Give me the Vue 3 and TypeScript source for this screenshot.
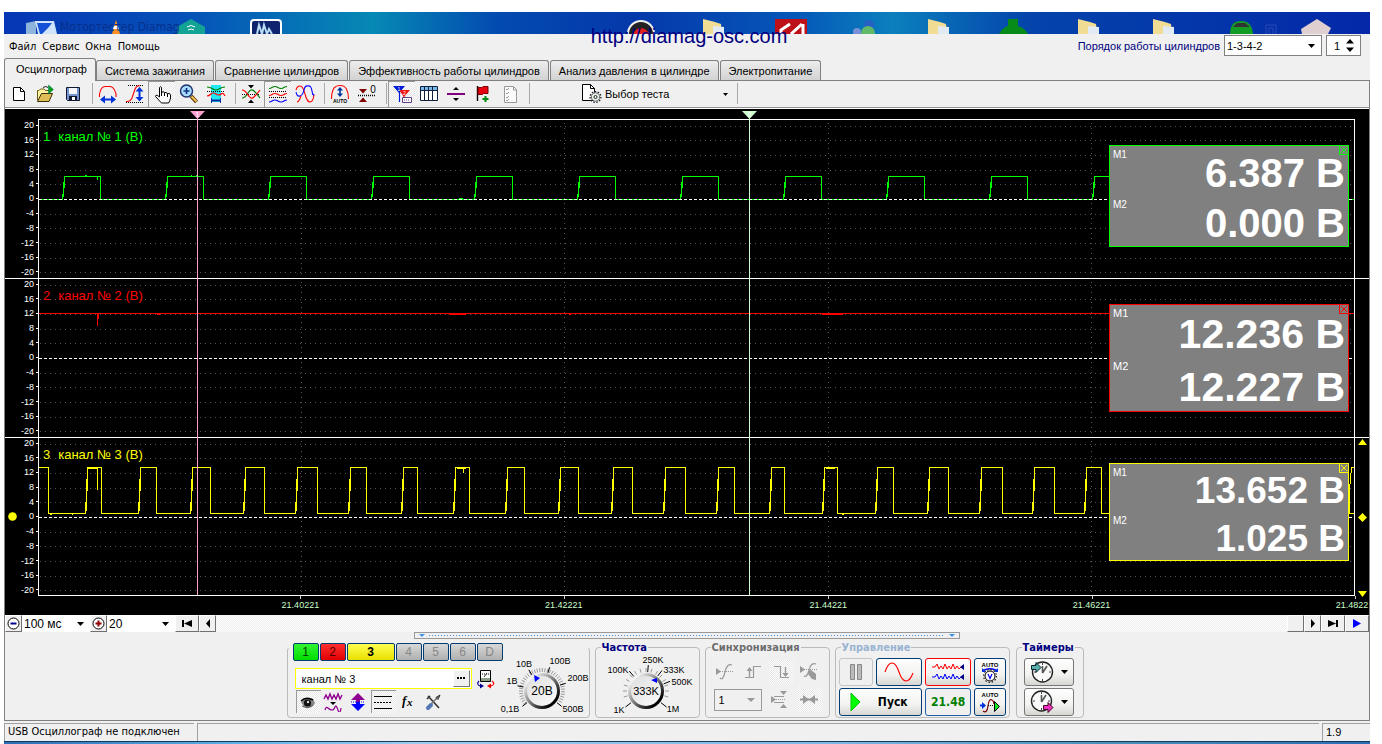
<script setup lang="ts">
import { h, ref } from 'vue'

type Shape = [tag: string, attrs: Record<string, string | number>, text?: string]
interface Art { w: number; h: number; s: Shape[] }

const line = (d: string, stroke: string, width = 1, extra: Record<string, string | number> = {}): Shape =>
  ['path', { d, stroke, fill: 'none', 'stroke-width': width, ...extra }]
const solid = (d: string, fill: string, extra: Record<string, string | number> = {}): Shape =>
  ['path', { d, fill, ...extra }]
const label = (x: number, y: number, text: string, fill: string, size: number, weight = 'normal', anchor = 'middle'): Shape =>
  ['text', { x, y, fill, 'font-size': size, 'font-weight': weight, 'text-anchor': anchor, 'font-family': 'Liberation Sans, Arial, sans-serif' }, text]
const dots = { 'stroke-dasharray': '1 1' }
const wave = (y: number) => `M1 ${y + 1}Q2.5 ${y + 1} 4 ${y}T7 ${y - 1}T10 ${y}T13 ${y + 1}T16 ${y}T19 ${y - 1}`

const art: Record<string, Art> = {
  blank: { w: 20, h: 20, s: [
    ['path', { d: 'M4.5 3.5H11.5L15.5 7.5V16.5H4.5Z', fill: '#fff', stroke: '#000' }], line('M11.5 3.5V7.5H15.5', '#000')] },
  open: { w: 20, h: 20, s: [
    ['path', { d: 'M1.5 16.5V6.5H3L4.5 5H8L9.5 6.5H13.5V9', fill: '#fff2a0', stroke: '#6b5a10' }],
    ['path', { d: 'M1.5 17.5L5.5 9.5H16.5L13 17.5Z', fill: '#e0bd55', stroke: '#3b300a' }],
    ['path', { d: 'M12.5 1L17.5 5.5L12.5 10Z', fill: '#0aa018', stroke: '#066', 'stroke-width': 0.5 }], line('M7 3.5Q10 1.5 12 3.5', '#222')] },
  save: { w: 20, h: 20, s: [
    ['path', { d: 'M3.5 3.5H16.5V16.5H4.5L3.5 15.5Z', fill: '#7794cf', stroke: '#101830' }],
    solid('M6 4H14V10H6Z', '#f4f6fc'), solid('M6 12H14V16H6Z', '#101830'), solid('M9 13H12V16H9Z', '#fff')] },
  period: { w: 20, h: 20, s: [
    line('M1.5 13V10Q3 2.5 7 2.5H12Q16 2.5 18 10V13', '#f00', 1.1), line('M4 15.5H16', '#0033d8', 2), solid('M2 15.5L7 11.5V19.5Z M18 15.5L13 11.5V19.5Z', '#0033d8')] },
  ampl: { w: 20, h: 20, s: [
    line('M3 1.5H18M1 18.5H18', '#000', 1, dots), line('M1 17.5Q5 18 7 14L10 5Q12 1 15 2', '#f00', 1.1),
    line('M14.5 6V14', '#0033d8', 2), solid('M14.5 3L18.5 7.5H10.5Z M14.5 17.5L18.5 13H10.5Z', '#0033d8')] },
  hand: { w: 20, h: 20, s: [
    ['path', { d: 'M7.5 13V3.5Q8.5 2 9.5 3.5V9L10 8Q12 7 12.5 9L13 8.5Q15 8 15.5 10L16 9.5Q18 9 18.5 11V14Q18 17 16.5 19H9.5L3.5 12.5Q3.5 10.5 5.5 11.5Z', fill: '#fff', stroke: '#000' }], line('M9.5 9V12M12.5 9V12M15.5 10V13', '#000')] },
  lens: { w: 20, h: 20, s: [
    line('M12 12L17.5 18', '#5a3308', 4), line('M12.5 12.5L17.5 17.5', '#f0c050', 2),
    ['circle', { cx: 7.5, cy: 7, r: 6, fill: '#a8dcff', stroke: '#1c2f6e', 'stroke-width': 1.4 }], line('M4.5 7H10.5M7.5 4V10', '#103080', 1.6)] },
  band: { w: 20, h: 20, s: [
    solid('M5 1H15V18H5Z', '#1fe8f0'), line('M1 3Q4 3 7 5T13 5T19 3', '#008000', 1.2), line('M1 7.5H19', '#000', 1, dots),
    line('M1 12Q3 12 5 10T10 10T15 10T19 12', '#f00', 1.2), line('M6 16.5H14', '#0030a0', 2), line('M5.5 14V19M14.5 14V19', '#0030a0')] },
  cross: { w: 20, h: 20, s: [
    solid('M7 1H13L10 4.5Z M7 19H13L10 15.5Z', '#000'), line('M1 10.5H19', '#000', 1, dots),
    line('M1 14Q4 14 7 9T13 7T19 14', '#008000', 1.2), line('M1 6Q4 6 7 11T13 13T19 6', '#f00', 1.2)] },
  stack: { w: 20, h: 20, s: [
    line(wave(3.5), '#008000', 1.2), line('M1 7.5H19', '#000', 1, dots), line(wave(10.5), '#f00', 1.2), line('M1 13.5H19', '#000', 1, dots), line(wave(17), '#0000ff', 1.2)] },
  overlap: { w: 20, h: 20, s: [
    line('M1 6Q2 2 5 2Q8 2 10 10T15 18Q18 18 19 11', '#f00', 1.1), line('M1 8Q2 13 5 12T9 6T13 2Q16 1 17 7T19 10', '#0000ff', 1.1), line('M2 18Q4 18 6 12', '#f00', 1.1)] },
  auto: { w: 20, h: 20, s: [
    line('M1.5 15Q1.5 8 4 4Q7 1 10 1.5Q14 1 16.5 5Q18.5 9 18.5 15', '#f00', 1.1), line('M10 5V11', '#0030a0', 1.6), solid('M10 3L13 6.5H7Z M10 13L13 9.5H7Z', '#0030a0'),
    label(10, 19, 'AUTO', '#000', 5, 'bold')] },
  zero: { w: 20, h: 20, s: [
    solid('M2 5H10L6 9.5Z M2 18H10L6 13.5Z', '#800000'), line('M1 11.5H19', '#000', 1.4, dots), label(16, 9, '0', '#000', 10)] },
  marks: { w: 20, h: 20, s: [
    solid('M1 2H13L7 9Z', '#0018d8'), solid('M7 6H18L12 13Z', '#f01010'), line('M7.5 7V18', '#0018d8', 1.2), line('M12 11V14', '#f01010'),
    label(7, 7, '1', '#fff', 5), label(12.5, 11, '2', '#fff', 5), ['path', { d: 'M10.500 13.500H19.500V18.500H10.500Z', fill: '#fff', stroke: '#604080' }], line('M12 16H18', '#604080', 1, dots)] },
  table: { w: 20, h: 20, s: [
    ['path', { d: 'M1.500 2.500H18.500V16.500H1.500Z', fill: '#fff', stroke: '#102040' }], solid('M2 3H18V6H2Z', '#79b9e8'), line('M1.5 6.5H18.5M5.5 3V16M9.5 3V16M13.5 3V16', '#102040')] },
  split: { w: 20, h: 20, s: [line('M1 10H19', '#800080', 2), solid('M7 6H13L10 3Z M7 14H13L10 17Z', '#000')] },
  flag: { w: 20, h: 20, s: [
    line('M4.500 2V17', '#000', 1.4), ['path', { d: 'M5 3.500H9L10 2.500H15V9.500H10.500L9.500 10.500H5Z', fill: '#e80010', stroke: '#700' }], line('M12.500 12V18M9.500 15H15.500', '#008a10', 2)] },
  list: { w: 20, h: 20, s: [
    ['path', { d: 'M4.500 2.500H13.500L16.500 5.500V18.500H4.500Z', fill: '#fafafa', stroke: '#999' }], line('M6 5L7 6L9 4M6 9L7 10L9 8M6 13L7 14L9 12M6 16L7 17L9 15', '#999'), line('M13.500 3V6H16', '#999')] },
  test: { w: 22, h: 20, s: [
    ['path', { d: 'M1.500 .500H9.500L13.500 4.500V16.500H1.500Z', fill: '#fff', stroke: '#000' }], line('M9.500 .500V4.500H13.500', '#000'),
    ['circle', { cx: 14.5, cy: 13, r: 5.4, fill: 'none', stroke: '#222', 'stroke-width': 1.4, 'stroke-dasharray': '1.5 1.5' }], ['circle', { cx: 14.5, cy: 13, r: 4.2, fill: '#e6f2e6', stroke: '#667' }], ['circle', { cx: 14.5, cy: 13, r: 1.5, fill: '#fff', stroke: '#222' }]] },
  down: { w: 7, h: 4, s: [solid('M0 0H7L3.5 4Z', '#000')] },
  downSmall: { w: 5, h: 3, s: [solid('M0 0H5L2.5 3Z', '#000')] },
  downGray: { w: 8, h: 4, s: [solid('M0 0H8L4 4Z', '#999')] },
  spin: { w: 8, h: 13, s: [solid('M0 4.500H8L4 0Z M0 8.500H8L4 13Z', '#000')] },
  minus: { w: 13, h: 13, s: [['circle', { cx: 6.5, cy: 6.5, r: 5.5, fill: '#fff', stroke: '#000' }], line('M3.500 6.500H9.500', '#000090', 2)] },
  plus: { w: 13, h: 13, s: [['circle', { cx: 6.5, cy: 6.5, r: 5.5, fill: '#fff', stroke: '#000' }], line('M3.500 6.500H9.500M6.500 3.500V9.500', '#900000', 2)] },
  first: { w: 12, h: 9, s: [solid('M1 1H3V8H1Z M11 1V8L3 4.500Z', '#000')] },
  last: { w: 12, h: 9, s: [solid('M9 1H11V8H9Z M1 1V8L9 4.500Z', '#000')] },
  prev: { w: 6, h: 9, s: [solid('M5 0V9L1 4.500Z', '#000')] },
  next: { w: 6, h: 9, s: [solid('M1 0V9L5 4.500Z', '#000')] },
  run: { w: 10, h: 9, s: [solid('M1 0V9L9 4.500Z', '#0000ff')] },
  more: { w: 9, h: 3, s: [solid('M0 0H2V2H0Z M3 0H5V2H3Z M6 0H8V2H6Z', '#000')] },
  device: { w: 20, h: 20, s: [
    ['path', { d: 'M4.500 1.500H14.500V12.500H4.500Z', fill: '#fff', stroke: '#000' }], solid('M5 9H14V12H5Z', '#8aa088'), line('M6 5H13', '#000', 1, dots), line('M8 8L11 4', '#333'),
    line('M3 12Q0 15 4 17', '#000090', 1.2), solid('M4 14.500L8 17L4 19.500Z', '#000090'), line('M16 12Q20 15 15 17', '#f00', 1.2), solid('M15 14.500L11 17L15 19.500Z', '#f00')] },
  eye: { w: 20, h: 20, s: [
    solid('M3 10Q8 4 15 7L17 11Q14 17 8 16Q5 14 3 10Z', '#888'), line('M3 9Q8 4 15 8', '#000', 1.5), ['circle', { cx: 9.5, cy: 11, r: 3.6, fill: '#111' }], ['circle', { cx: 10, cy: 10, r: 1.2, fill: '#ddd' }], line('M4 14Q9 17 15 13', '#555')] },
  noise: { w: 20, h: 20, s: [
    line('M1 7L3 3L5 7L7 2L9 7L11 3L13 7L15 2L17 7L19 3', '#900090', 1.4), solid('M7 10H13L10 13Z', '#000'), line('M2 18Q3 14 5 16T9 18T12 15T15 18T18 16', '#900090', 1.2)] },
  height: { w: 20, h: 20, s: [solid('M10 1L17 8H12V10H8V8H3Z', '#900090'), solid('M10 19L17 12H12V10H8V12H3Z', '#0000ff'), line('M3 10H17', '#0000ff', 1, dots)] },
  lines: { w: 20, h: 20, s: [line('M1 4.500H19M1 16.500H19', '#000', 1.2), line('M1 10.500H19', '#000', 1, { 'stroke-dasharray': '2 1' })] },
  fx: { w: 20, h: 20, s: [['text', { x: 4, y: 13, 'font-size': 13, 'font-style': 'italic', 'font-weight': 'bold', 'font-family': 'Liberation Serif, serif' }, 'f'], ['text', { x: 9, y: 14, 'font-size': 11, 'font-style': 'italic', 'font-weight': 'bold', 'font-family': 'Liberation Serif, serif' }, 'x']] },
  tools: { w: 20, h: 20, s: [
    line('M5 4L16 16M4 7L7 4', '#333', 1.6), line('M16 4L8 12', '#777', 1.6), line('M17 3L13 5.500L15 7.500Z', '#333'), line('M8 13L5 16', '#5578b5', 4, { 'stroke-linecap': 'round' })] },
  sRise: { w: 20, h: 20, s: [solid('M1 6L6 9.500L1 13Z', '#999'), line('M1 9.500H19', '#999', 1, dots), line('M5 16Q8 19 10 10T17 3', '#999', 1.2)] },
  sUp: { w: 20, h: 20, s: [line('M2 15.500H10.500V4.500H18', '#999', 1.2), line('M6.500 7V15', '#999', 1.4), solid('M6.500 5L9.500 9H3.500Z', '#999')] },
  sDown: { w: 20, h: 20, s: [line('M3 4.500H9.500V15.500H18', '#999', 1.2), line('M14.500 5V12', '#999', 1.4), solid('M14.500 15L17.500 11H11.500Z', '#999')] },
  sHand: { w: 20, h: 20, s: [solid('M1 4L6 7.500L1 11Z', '#999'), line('M1 7.500H19', '#999', 1, dots), line('M5 14Q8 16 10 8T17 2', '#999', 1.2), solid('M9 9L12 8L17 12V18L13 17L9 12Z', '#999')] },
  sLevel: { w: 20, h: 20, s: [solid('M2 6L7 9.500L2 13Z M11 1H18L14.500 5Z M11 18H18L14.500 14Z', '#999'), line('M5 6.500H15M5 12.500H15', '#999'), line('M5 9.500H17', '#999', 1, dots)] },
  sJoin: { w: 20, h: 20, s: [solid('M4 5L10 9.500L4 14Z M16 5L10 9.500L16 14Z', '#999'), line('M1 9.500H19', '#999', 2)] },
  pause: { w: 12, h: 16, s: [['path', { d: 'M.500 .500H4.500V15.500H.500Z M7.500 .500H11.500V15.500H7.500Z', fill: '#bbb', stroke: '#888' }]] },
  sine: { w: 30, h: 20, s: [line('M1 10Q4 1 8 1Q12 1 15 10Q18 19 22 19Q26 19 29 11', '#f00', 1.1)] },
  dual: { w: 34, h: 20, s: [
    line('M1 5H4L6 2L8 7L10 4L12 7L14 2L16 7L18 4L20 7L22 2L24 7L26 4L28 7L30 5', '#f00'), line('M1 15H4L6 12L8 17L10 14L12 17L14 12L16 17L18 14L20 17L22 12L24 17L26 14L28 17L30 15', '#0000ff'), solid('M33 2V8L29 5Z M33 12V18L29 15Z', '#000080')] },
  autoV: { w: 22, h: 24, s: [
    label(11, 7, 'AUTO', '#000', 6, 'bold'), line('M4 10.500Q11 7 18 10.500', '#0000ff', 1.4), solid('M3 8V12H7Z M19 8V12H15Z', '#0030e0'),
    ['circle', { cx: 11, cy: 16, r: 6.4, fill: 'none', stroke: '#222', 'stroke-width': 1.2, 'stroke-dasharray': '1.5 1.8' }], ['circle', { cx: 11, cy: 16, r: 5, fill: '#fff', stroke: '#000' }], line('M9 14L11 18.500L13 14', '#0000ff', 1.2)] },
  autoS: { w: 22, h: 24, s: [
    label(11, 7, 'AUTO', '#000', 6, 'bold'), line('M1 15.500H5', '#0030e0', 2), solid('M3 12L7 15.500L3 19Z', '#0030e0'), line('M4 21Q8 24 9 16T13 10Q15 11 15 14', '#700', 1.2), ['path', { d: 'M15.500 11.500L20.500 16.500L15.500 21.500Z', fill: '#10e820', stroke: '#000' }], line('M9 15.500H15', '#000', 1, dots)] },
  play: { w: 11, h: 20, s: [['path', { d: 'M1 1L10 10L1 19Z', fill: '#00ff00', stroke: '#0ac00a' }]] },
  clockIn: { w: 24, h: 24, s: [
    ['circle', { cx: 12.5, cy: 12, r: 10, fill: '#fafafa', stroke: '#222', 'stroke-width': 1.4 }], line('M12.500 3V5M12.500 19V21M4 12H6M19 12H21', '#444'), line('M12.500 13L17 6M12.500 13V6', '#555', 1.6), ['path', { d: 'M1.500 5.500H6V2.500L11 7.500L6 12.500V9.500H1.500Z', fill: '#58b0aa', stroke: '#023' }]] },
  clockOut: { w: 24, h: 24, s: [
    ['circle', { cx: 11.5, cy: 11, r: 10, fill: '#fafafa', stroke: '#222', 'stroke-width': 1.4 }], line('M11.500 2V4M11.500 18V20M3 11H5M18 11H20', '#444'), line('M11.500 12L16 5M11.500 12V5', '#555', 1.6), ['path', { d: 'M13.500 15.500H18V12.500L23 17.500L18 22.500V19.500H13.500Z', fill: '#f030c0', stroke: '#402' }]] },
}

const Glyph = (props: { name: string }) => {
  const a = art[props.name]
  return h('svg', { width: a.w, height: a.h, viewBox: `0 0 ${a.w} ${a.h}`, 'aria-hidden': 'true', style: 'display:block;flex:none' },
    a.s.map(([tag, attrs, text]) => h(tag, attrs, text)))
}
Glyph.props = ['name']

const tabs = ['Осциллограф', 'Система зажигания', 'Сравнение цилиндров', 'Эффективность работы цилиндров', 'Анализ давления в цилиндре', 'Электропитание']
const activeTab = ref(0)
const toolbar: { icon: string; title: string; on?: boolean }[][] = [
  [{ icon: 'blank', title: 'Новый' }, { icon: 'open', title: 'Открыть' }, { icon: 'save', title: 'Сохранить' }],
  [{ icon: 'period', title: 'Период' }, { icon: 'ampl', title: 'Амплитуда' }, { icon: 'hand', title: 'Рука', on: true }, { icon: 'lens', title: 'Лупа' }, { icon: 'band', title: 'Участок' }],
  [{ icon: 'cross', title: 'Совместить' }, { icon: 'stack', title: 'Раздельно', on: true }, { icon: 'overlap', title: 'Наложение' }],
  [{ icon: 'auto', title: 'Авто' }, { icon: 'zero', title: 'Ноль' }],
  [{ icon: 'marks', title: 'Маркеры', on: true }, { icon: 'table', title: 'Таблица' }, { icon: 'split', title: 'Разделить' }, { icon: 'flag', title: 'Флаг' }, { icon: 'list', title: 'Список' }],
]

const ticks = [20, 16, 12, 8, 4, 0, -4, -8, -12, -16, -20]
const PLOT_W = 1315
const levelY = (v: number) => Math.round(79 - v * 3.67) + 0.5

/* each pulse: start of the rising edge and the falling edge, in plot units */
const pulsePath = (pulses: number[][], low: number, high: number, from: number, startHigh = 0) => {
  let d = startHigh ? `M${from} ${high}H${startHigh}V${low}` : `M${from} ${low}`
  for (const [a, b] of pulses) d += `H${a + 0.5}L${a + 1.5} ${(low + high) / 2}H${a + 1.5}L${a + 2.5} ${high}H${b + 0.5}V${low}`
  return d + `H${PLOT_W}`
}
const edgePath = (pulses: number[][], low: number, high: number) =>
  pulses.map(([a]) => `M${a + 1.5} ${low - 3}V${(low + high) / 2}M${a + 2.5} ${(low + high) / 2}V${high}`).join('')
const first = Array.from({ length: 13 }, (_, i) => [23 + i * 103, 61 + i * 103])
const third = [[46, 62], [99, 117], [151, 171], [204, 225], [256, 278], [309, 327], [362, 378], [414, 430], [466, 485], [519, 539], [572, 593], [624, 646], [677, 695], [730, 745], [783, 798], [836, 854], [888, 909], [940, 963], [993, 1015], [1045, 1062], [1098, 1116], [1151, 1170], [1204, 1222], [1257, 1275]]
const channels = [
  { n: 1, color: '#00ff00', path: pulsePath(first, 79.5, 56.5, 0) + edgePath(first, 79.5, 56.5), extra: 'M46 55.500H48M152 55.500H153M157 55.500H159M420 78.500H424M58.500 57V60', m: ['6.387 В', '0.000 В'] },
  { n: 2, color: '#ff0000', path: `M0 34.500H${PLOT_W}`, extra: 'M58.500 35V47M410 35.500H427M530 35.500H532M783 35.500H804M118 35.500H121M59.500 35V40', m: ['12.236 В', '12.227 В'] },
  { n: 3, color: '#ffff00', path: pulsePath(third, 75.5, 29.5, 0, 9.5) + edgePath(third, 75.5, 29.5) + 'M1310.500 75V52L1312.500 29.500H1315', extra: 'M48 30.500H59M58.500 31V52M418 30.500H427M424.500 31V35M787 30.500H796M11 76.500H13M33 76.500H34M803 76.500H805', m: ['13.652 В', '1.025 В'] },
]
const at = (x: number) => ({ left: `${(x / PLOT_W) * 100}%` })
const times = [{ x: 262, t: '21.40221' }, { x: 525, t: '21.42221' }, { x: 789, t: '21.44221' }, { x: 1052, t: '21.46221' }, { x: 1315, t: '21.4822' }]
const markers = [{ x: 158, id: 1, color: '#ff9fcf' }, { x: 710, id: 2, color: '#ccffcc' }]

const channelButtons = ['1', '2', '3', '4', '5', '6', 'D']
const channelName = ref('канал № 3')
const channelTools = [{ icon: 'eye', on: true, t: 'Показать' }, { icon: 'noise', t: 'Фильтр' }, { icon: 'height', t: 'Масштаб' }, { icon: 'lines', on: true, t: 'Линии' }, { icon: 'fx', t: 'Функция' }, { icon: 'tools', t: 'Настройки' }]
const syncTop = [{ icon: 'sRise', t: 'Уровень' }, { icon: 'sUp', t: 'Фронт' }, { icon: 'sDown', on: true, t: 'Спад' }, { icon: 'sHand', t: 'Вручную' }]

const ray = (cx: number, cy: number, deg: number, r1: number, r2: number) => {
  const a = (deg * Math.PI) / 180
  return `M${(cx + Math.sin(a) * r1).toFixed(1)} ${(cy - Math.cos(a) * r1).toFixed(1)}L${(cx + Math.sin(a) * r2).toFixed(1)} ${(cy - Math.cos(a) * r2).toFixed(1)}`
}
const rays = (cx: number, cy: number, degs: number[], r1: number, r2: number) => degs.map((d) => ray(cx, cy, d, r1, r2)).join('')
const range = (a: number, b: number, step: number) => Array.from({ length: Math.floor((b - a) / step) + 1 }, (_, i) => a + i * step)
const voltMinor = rays(44, 39, range(-125, 125, 7), 19, 23)
const voltMajor = rays(44, 39, [-128, -78, -32, 18, 72, 128], 19, 25)
const freqMinor = rays(50, 39, range(-105, 105, 15), 19, 23)
const freqMajor = rays(50, 39, [-128, -40, 5, 38, 68, 128], 19, 26)
</script>

<template>
  <div class="desk">
    <svg class="wall" viewBox="0 0 1366 22" preserveAspectRatio="none" aria-hidden="true">
      <defs>
        <linearGradient id="sky"><stop offset="0" stop-color="#0636b4" /><stop offset=".13" stop-color="#0550b8" /><stop offset=".27" stop-color="#0689b4" /><stop offset=".36" stop-color="#034bb0" /><stop offset=".46" stop-color="#0538ab" /><stop offset=".58" stop-color="#0557b8" /><stop offset=".65" stop-color="#0b80bd" /><stop offset=".75" stop-color="#0444ab" /><stop offset="1" stop-color="#0428a8" /></linearGradient>
      </defs>
      <rect width="1366" height="22" fill="url(#sky)" />
      <path d="M22 11L32 9V22H22Z" fill="#8fb4dc" /><path d="M31 9H50L53 22H34Z" fill="#cfe4fa" /><path d="M33 11H48L44 16L38 22H36Z" fill="#1550d8" />
      <path d="M112 8L116 22H108Z" fill="#ff9020" /><path d="M110 14H114L115 17H109Z" fill="#fff" />
      <path d="M187 7L201 15V22H173V15Z" fill="#12a394" /><path d="M183 15Q187 12 191 15M184 18Q187 16 190 18" stroke="#fff" fill="none" />
      <text x="56" y="19" font-size="12" fill="#06308c">Мотортестер Diamag</text>
      <rect x="247" y="8" width="30" height="20" rx="3" fill="#10236e" stroke="#fff" stroke-width="2" /><path d="M253 22L255 13L258 22L260 13L263 22L265 17L268 22" stroke="#b8dcf4" stroke-width="2" fill="none" />
      <circle cx="637" cy="22" r="13" fill="#222" stroke="#eee" stroke-width="2" /><path d="M628 22Q637 10 646 22Z" fill="#e02020" />
      <path v-for="x in [699, 924, 1074, 1149]" :key="x" :d="`M${x} 7L${x + 12} 10L${x + 18} 12L${x + 19} 22H${x}Z`" fill="#f1dc94" />
      <path v-for="x in [709, 934, 1084, 1159]" :key="x" :d="`M${x} 14L${x + 11} 15V22H${x}Z`" fill="#e2ebf4" />
      <rect x="771" y="7" width="32" height="15" fill="#bd1018" /><path d="M786 12L777 18V22M798 12L787 22M799 12V22" stroke="#fff" stroke-width="3" fill="none" />
      <circle cx="865" cy="13" r="5" fill="#285fc5" /><circle cx="864" cy="21" r="7" fill="#62b968" /><circle cx="853" cy="20" r="4" fill="#7790d8" />
      <path d="M1004 7H1014V14Q1021 16 1024 22H995Q998 16 1004 14Z" fill="#078b18" />
      <path d="M1226 22Q1226 9 1237 9Q1248 9 1249 22Z" fill="#129c24" /><path d="M1229 15L1233 11H1241L1246 15Z" fill="#333" />
      <path d="M1262 22V13H1272V22M1265 22V16H1269V22" stroke="#2a4ab8" fill="none" /><path d="M1297 17L1313 7L1327 16L1324 22H1298Z" fill="#e0cfd0" />
    </svg>
    <a class="site" href="#">http://diamag-osc.com</a>

    <div class="window">
      <header class="menu">
        <nav><a v-for="m in ['Файл', 'Сервис', 'Окна', 'Помощь']" :key="m" href="#">{{ m }}</a></nav>
        <div class="order">
          <label for="order">Порядок работы цилиндров</label>
          <span class="pick order-pick"><select id="order"><option>1-3-4-2</option></select><Glyph name="down" /></span>
          <span class="pick number-pick"><input value="1" aria-label="Номер цилиндра"><Glyph name="spin" /></span>
        </div>
      </header>
      <div class="tabs" role="tablist">
        <button v-for="(t, i) in tabs" :key="t" role="tab" :class="{ active: i === activeTab }" @click="activeTab = i">{{ t }}</button>
      </div>

      <main>
        <div class="toolbar">
          <template v-for="(g, i) in toolbar" :key="i">
            <button v-for="b in g" :key="b.icon" :class="{ on: b.on }" :aria-label="b.title"><Glyph :name="b.icon" /></button>
            <i class="sep"></i>
          </template>
          <button class="test"><Glyph name="test" /><span>Выбор теста</span><Glyph name="downSmall" /></button>
          <i class="sep"></i>
        </div>

        <section class="scope">
          <div v-for="c in channels" :key="c.n" :class="['row', 'row-' + c.n]">
            <div class="axis">
              <svg v-if="c.n === 3" class="grip" width="9" height="9" viewBox="0 0 9 9"><circle cx="4.500" cy="4.500" r="4.300" fill="#ff0" /></svg>
              <ol><li v-for="t in ticks" :key="t">{{ t }}</li></ol>
            </div>
            <div class="plot">
              <svg :viewBox="`0 0 ${PLOT_W} 158`" preserveAspectRatio="none" shape-rendering="crispEdges" fill="none">
                <path v-for="t in ticks" v-show="t" :key="t" :d="`M1 ${levelY(t)}H${PLOT_W}`" stroke="#555" stroke-dasharray="1 4" />
                <path v-for="t in times.slice(0, 4)" :key="t.x" :d="`M${t.x + 0.5} 3V158`" stroke="#555" stroke-dasharray="1 4" />
                <path :d="c.path" :stroke="c.color" />
                <path :d="c.extra" :stroke="c.color" />
                <path d="M0 79.500H1315" stroke="#fff" stroke-dasharray="3 2" />
              </svg>
              <span class="caption"><b>{{ c.n }}</b>канал № {{ c.n }} (В)</span>
              <div class="readout">
                <button aria-label="Закрыть"><svg width="10" height="10" viewBox="0 0 10 10"><path d="M.500 .500H9.500V9.500H.500ZM2 2L8 8M8 2L2 8" stroke="currentColor" fill="none" /></svg></button>
                <div v-for="(v, i) in c.m" :key="i" class="measure"><span>M{{ i + 1 }}</span><strong>{{ v }}</strong></div>
              </div>
            </div>
            <div class="gutter">
              <svg v-if="c.n === 3" width="9" height="159" viewBox="0 0 9 159" fill="#ff0"><path d="M0 7H9L4.500 1ZM4.500 75L9 79.500L4.500 84L0 79.500ZM0 153H9L4.500 159Z" /></svg>
            </div>
          </div>
          <div class="times"><span v-for="t in times" :key="t.t" :style="at(t.x)">{{ t.t }}</span></div>
          <div class="markers">
            <div v-for="m in markers" :key="m.id" class="marker" :style="{ ...at(m.x), color: m.color }">
              <svg width="15" height="8" viewBox="0 0 15 8"><path d="M0 0H15L7.500 8Z" fill="currentColor" /><text x="7.500" y="6" font-size="7" fill="#fff" text-anchor="middle">{{ m.id }}</text></svg>
            </div>
          </div>
        </section>

        <div class="zoombar">
          <button class="sq" aria-label="Сжать"><Glyph name="minus" /></button>
          <span class="pick flat"><select aria-label="Развёртка"><option>100 мс</option></select><Glyph name="down" /></span>
          <button class="sq" aria-label="Растянуть"><Glyph name="plus" /></button>
          <span class="pick flat"><select aria-label="Масштаб"><option>20</option></select><Glyph name="down" /></span>
          <button class="nav" aria-label="В начало"><Glyph name="first" /></button>
          <button class="sq" aria-label="Назад"><Glyph name="prev" /></button>
          <span class="track"></span>
          <button class="sq" aria-label="Ползунок"></button>
          <button class="sq" aria-label="Вперёд"><Glyph name="next" /></button>
          <button class="nav" aria-label="В конец"><Glyph name="last" /></button>
          <button class="nav" aria-label="Воспроизвести"><Glyph name="run" /></button>
        </div>

        <div class="splitter"><i></i><span></span><i></i></div>

        <div class="panels">
          <fieldset class="channel" aria-label="Канал">
            <div class="channel-left">
              <div class="chans"><button v-for="b in channelButtons" :key="b" :class="'ch-' + b" :disabled="b > '3'">{{ b }}</button></div>
              <div class="name-row">
                <span class="name"><input v-model="channelName" aria-label="Имя канала"><button aria-label="Выбрать"><Glyph name="more" /></button></span>
                <button class="plain" aria-label="Датчик"><Glyph name="device" /></button>
              </div>
              <div class="tool-row"><button v-for="b in channelTools" :key="b.icon" :class="['plain', { on: b.on }]" :aria-label="b.t"><Glyph :name="b.icon" /></button></div>
            </div>
            <svg class="knob" width="92" height="70" viewBox="0 0 92 70">
              <defs>
                <linearGradient id="rim" x1="0" y1="0" x2="1" y2="1"><stop offset=".1" stop-color="#fff" /><stop offset=".5" stop-color="#777" /><stop offset=".85" stop-color="#000" /></linearGradient>
                <linearGradient id="cap" x1="0" y1="0" x2="1" y2="1"><stop offset="0" stop-color="#ddd" /><stop offset="1" stop-color="#fcfcfc" /></linearGradient>
              </defs>
              <path :d="voltMinor" stroke="#999" /><path :d="voltMajor" stroke="#000" />
              <circle cx="44" cy="39" r="16.500" fill="url(#cap)" stroke="url(#rim)" stroke-width="3" />
              <path d="M36 23L42 26L37 30Z" fill="#00f" />
              <text x="44" y="43" class="big">20В</text>
              <text x="26" y="15">10В</text><text x="62" y="12">100В</text><text x="14" y="32">1В</text><text x="80" y="29">200В</text><text x="12" y="60">0,1В</text><text x="75" y="60">500В</text>
            </svg>
          </fieldset>

          <fieldset class="freq"><legend>Частота</legend>
            <svg class="knob" width="100" height="70" viewBox="0 0 100 70">
              <path :d="freqMinor" stroke="#999" /><path :d="freqMajor" stroke="#000" />
              <circle cx="50" cy="39" r="16.500" fill="url(#cap)" stroke="url(#rim)" stroke-width="3" />
              <path d="M61 26L61 31L55 28Z" fill="#00f" />
              <text x="50" y="43" class="mid">333K</text>
              <text x="57" y="11">250K</text><text x="22" y="21">100K</text><text x="78" y="21">333K</text><text x="86" y="33">500K</text><text x="23" y="61">1K</text><text x="77" y="60">1M</text>
            </svg>
          </fieldset>

          <fieldset class="sync"><legend>Синхронизация</legend>
            <div class="sync-row"><button v-for="b in syncTop" :key="b.icon" :class="['plain', { dither: b.on }]" :aria-label="b.t" disabled><Glyph :name="b.icon" /></button></div>
            <div class="sync-row">
              <span class="pick sync-pick"><select aria-label="Канал синхронизации"><option>1</option></select><Glyph name="downGray" /></span>
              <button class="plain" aria-label="Порог" disabled><Glyph name="sLevel" /></button>
              <button class="plain dither" aria-label="Свести" disabled><Glyph name="sJoin" /></button>
            </div>
          </fieldset>

          <fieldset class="control"><legend>Управление</legend>
            <div class="control-grid">
              <button class="off" aria-label="Пауза" disabled><Glyph name="pause" /></button>
              <button aria-label="Один кадр"><Glyph name="sine" /></button>
              <button class="red" aria-label="Непрерывно"><Glyph name="dual" /></button>
              <button aria-label="Авто напряжение"><Glyph name="autoV" /></button>
              <button class="start"><Glyph name="play" /><span>Пуск</span></button>
              <output>21.48</output>
              <button aria-label="Авто запуск"><Glyph name="autoS" /></button>
            </div>
          </fieldset>

          <fieldset class="timers"><legend>Таймеры</legend>
            <button aria-label="Таймер запуска"><Glyph name="clockIn" /><Glyph name="down" /></button>
            <button aria-label="Таймер остановки"><Glyph name="clockOut" /><Glyph name="down" /></button>
          </fieldset>
        </div>
      </main>

      <footer><span class="state">USB Осциллограф не подключен</span><span class="fill"></span><span class="version">1.9</span></footer>
    </div>
    <div class="taskbar"></div>
  </div>
</template>

<style>
body { background: #fff; }
</style>

<style scoped>
* { box-sizing: border-box; }
.desk { position: relative; padding: 12px 12px 0 4px; font: 11px/14px "Liberation Sans", Arial, sans-serif; color: #000; }
button, input, select { font: inherit; color: inherit; margin: 0; padding: 0; border: 0; background: none; appearance: none; border-radius: 0; }
a { color: inherit; text-decoration: none; }
.wall { display: block; width: 100%; height: 22px; }
.wall text { font-family: "DejaVu Sans Condensed", sans-serif; }
.site { position: absolute; left: 0; right: 4px; top: 24px; text-align: center; color: #000080; font-size: 20px; line-height: 24px; }
.window { background: #f0f0f0; }
.menu { display: flex; justify-content: space-between; height: 24px; font-family: "DejaVu Sans Condensed", "DejaVu Sans", sans-serif; }
.menu nav { display: flex; gap: 6px; padding: 6px 0 0 5px; }
.order { display: flex; gap: 4px; padding: 1px 9px 0 0; font-family: "Liberation Sans", Arial, sans-serif; }
.order label { color: #000080; line-height: 22px; }
.pick { display: flex; align-items: center; position: relative; background: #fff; border: 1px solid #808080; }
.pick select, .pick input { width: 100%; height: 100%; padding-left: 2px; }
.pick > svg { position: absolute; right: 6px; pointer-events: none; }
.order-pick { width: 98px; height: 21px; }
.number-pick { width: 35px; height: 21px; }
.number-pick input { padding-left: 7px; }
.tabs { display: flex; align-items: flex-end; height: 22px; }
.tabs button { height: 20px; padding: 0 8px; margin-right: 1px; border: 1px solid #808080; border-bottom: 0; border-radius: 3px 3px 0 0; background: linear-gradient(#ededed, #d2d2d2); white-space: nowrap; }
.tabs .active { height: 23px; margin: 0 0 -1px; padding: 0 8px 2px 11px; background: #f0f0f0; position: relative; }
main { border: 1px solid #808080; }
.toolbar { display: flex; align-items: stretch; height: 28px; padding-bottom: 1px; border-bottom: 1px solid #fff; box-shadow: inset 0 -1px #909090; }
.toolbar button { width: 27px; display: flex; align-items: center; justify-content: center; }
.on, .dither { background: repeating-conic-gradient(#fff 0 25%, #e6e6e6 0 50%) 0 0 / 2px 2px; }
.on { box-shadow: inset 1px 1px #999; }
.sep { width: 8px; margin: 2px 0 3px; background: linear-gradient(#aaa, #aaa) 6px 0 / 1px 100% no-repeat; }
.toolbar .test { width: 200px; padding: 0 3px 0 50px; justify-content: flex-start; gap: 2px; }
.test span { flex: 1; text-align: left; }
.scope { position: relative; background: #000; color: #fff; padding-top: 10px; overflow: hidden; }
.row { display: flex; height: 159px; border-top: 1px solid #fff; }
.row-1 { border-top-color: #000; --c: #00ff00; --row: 50px; --size: 40px; --tag: 10px; }
.row-2 { --c: #ff0000; --row: 53px; --size: 41px; --tag: 11px; }
.row-3 { --c: #ffff00; --row: 48px; --size: 37px; --tag: 10px; }
.axis { width: 33px; display: flex; align-items: center; justify-content: flex-end; margin-top: -1px; }
.grip { margin: 0 auto 0 3px; flex: none; }
.axis ol { list-style: none; margin: 0; padding: 0; height: 100%; display: flex; flex-direction: column; justify-content: space-between; font-size: 9px; line-height: 12px; text-align: right; }
.axis li { display: flex; align-items: center; justify-content: flex-end; gap: 2px; }
.axis li::after { content: ""; width: 2px; height: 1px; background: #fff; }
.plot { position: relative; flex: 1; border: solid #fff; border-width: 0 1px; }
.row-1 .plot { border-top-width: 1px; margin-top: -1px; }
.plot > svg { display: block; width: 100%; height: 158px; }
.caption { position: absolute; left: 4px; top: 9px; color: var(--c); font-size: 13px; line-height: 16px; }
.caption b { font-weight: normal; margin-right: 8px; }
.readout { position: absolute; right: 5px; top: 25px; width: 240px; border: 1px solid var(--c); background: #808080; color: #fff; }
.readout button { position: absolute; right: -1px; top: -1px; color: var(--c); }
.readout button svg { display: block; }
.measure { display: flex; justify-content: space-between; height: var(--row); padding: 1px 3px; }
.measure span { font-size: var(--tag); line-height: 15px; }
.measure strong { font-size: var(--size); line-height: 53px; }
.row-3 .measure strong { line-height: 51px; }
.row-2 .measure strong { line-height: 56px; }
.gutter { width: 14px; padding-left: 3px; }
.gutter svg { display: block; }
.times { position: relative; height: 20px; margin: -1px 14px 0 33px; border-top: 1px solid #fff; font-size: 9px; line-height: 18px; color: #ccffcc; }
.times span { position: absolute; width: 40px; margin-left: -20px; text-align: center; }
.times span:last-child { width: 34px; }
.times span::before { content: ""; position: absolute; left: 20px; top: 0; width: 1px; height: 3px; background: #ccc; }
.markers { position: absolute; inset: 2px 15px 20px 34px; pointer-events: none; }
.marker { position: absolute; top: 0; bottom: 0; width: 1px; background: currentColor; }
.marker svg { position: absolute; left: -7px; top: 0; }
.zoombar { display: flex; height: 17px; }
.zoombar button { display: flex; align-items: center; justify-content: center; background: #f0f0f0; border: 1px solid; border-color: #fff #707070 #707070 #fff; }
.sq { width: 17px; }
.nav { width: 24px; }
.flat { width: 68px; border: 0; font-size: 12px; }
.track { flex: 1; background: repeating-conic-gradient(#fff 0 25%, #ececec 0 50%) 0 0 / 2px 2px; }
.splitter { display: flex; align-items: center; gap: 4px; width: 40%; height: 7px; margin: 0 auto; border: 1px solid #999; padding: 0 4px; }
.splitter span { flex: 1; height: 1px; background: repeating-linear-gradient(90deg, #3c94e8 0 1px, transparent 1px 3px); }
.splitter i { border: solid transparent; border-width: 3px 3px 0; border-top-color: #3c94e8; }
.panels { display: flex; justify-content: center; gap: 5px; height: 81px; padding: 8px 4px 2px 0; }
fieldset { position: relative; min-width: 0; margin: 0; padding: 0; height: 71px; border: 1px solid #bbb; border-radius: 4px; }
legend { position: absolute; left: 5px; top: -7px; padding: 0 1px; background: #f0f0f0; color: #000080; font: bold 11px/14px "DejaVu Sans Condensed", "DejaVu Sans", sans-serif; }
.channel { width: 303px; display: flex; border-top-color: transparent; }
.channel-left { width: 210px; margin-top: -5px; padding-left: 5px; }
.chans { display: flex; gap: 1px; }
.chans button { flex: none; width: 26px; height: 18px; border: 1px solid #003c74; border-radius: 2px; font-size: 12px; line-height: 16px; background: linear-gradient(#d8d8d8, #b0b0b0); color: #888; }
.chans .ch-1 { background: linear-gradient(#34f434, #00dc00); color: #040; }
.chans .ch-2 { background: linear-gradient(#ff3030, #e00000); color: #500; }
.chans .ch-3 { width: 48px; background: linear-gradient(#ffff50, #e8e000); color: #000; font-weight: bold; }
.name-row { display: flex; align-items: center; gap: 2px; margin: 6px 0 0 2px; }
.name { display: flex; flex: none; width: 177px; height: 21px; padding: 1px; border: 1px solid #ffff00; background: #fff; }
.name input { flex: 1; min-width: 0; padding-left: 5px; }
.name button { width: 17px; display: flex; align-items: center; justify-content: center; background: #f0f0f0; border: 1px solid; border-color: #fff #777 #777 #fff; }
.plain { flex: none; width: 25px; height: 23px; display: flex; align-items: center; justify-content: center; }
.tool-row { display: flex; margin-left: 3px; }
.knob { display: block; flex: none; margin-top: 4px; }
.knob text { font-size: 9px; text-anchor: middle; }
.knob .big { font-size: 12px; }
.knob .mid { font-size: 11px; }
.freq { width: 105px; }
.sync { width: 125px; padding: 10px 7px 0 7px; }
.sync legend { color: #6d6d6d; }
.sync-row { display: flex; align-items: center; justify-content: space-between; height: 27px; }
.sync-row + .sync-row { padding-left: 1px; height: 30px; }
.sync-pick { width: 48px; height: 22px; border-color: #999; background: none; }
.sync-pick select { padding-left: 4px; }
.control { width: 175px; padding: 10px 3px 0; }
.control legend { color: #9ab4d2; }
.control-grid { display: grid; grid-template-columns: 34fr 46fr 46fr 31fr; grid-auto-rows: 28px; gap: 2px 3px; }
.control button, .timers button, output { display: flex; align-items: center; justify-content: center; border: 1px solid #003c74; border-radius: 3px; background: linear-gradient(#fefefe, #f2f2f0 60%, #d6d6d2); }
.control .off { border-color: #c4c4c4; background: #f0f0f0; }
.control .red { border-color: #f00; }
.control .start { grid-column: span 2; padding: 0 10px; justify-content: flex-start; font: bold 12px/14px "DejaVu Sans Condensed", "DejaVu Sans", sans-serif; }
.start span { flex: 1; padding-left: 14px; text-align: center; }
output { border-color: #1c5fa8; background: #f0f0f0; color: #008000; font: bold 12px/14px "DejaVu Sans Condensed", "DejaVu Sans", sans-serif; }
.panels .timers { width: 68px; margin-left: 1px; padding: 10px 9px 0 7px; display: flex; flex-direction: column; gap: 2px; }
.timers button { width: 50px; height: 28px; gap: 7px; border-color: #777; }
footer { display: flex; gap: 3px; height: 20px; padding-top: 2px; font-family: "DejaVu Sans Condensed", "DejaVu Sans", sans-serif; }
footer span { border: solid #a0a0a0; border-width: 1px 0 0 1px; padding: 1px 3px; }
.state { width: 190px; }
.fill { flex: 1; }
.version { width: 48px; font-family: "Liberation Sans", Arial, sans-serif; }
.taskbar { height: 3px; border-top: 1px solid #123a5c; background: linear-gradient(90deg, #2b6cb4, #60b4e8 18%, #9dccee 30%, #7fb8e4 60%, #4a92b8 80%, #2b6cb4); }
</style>
